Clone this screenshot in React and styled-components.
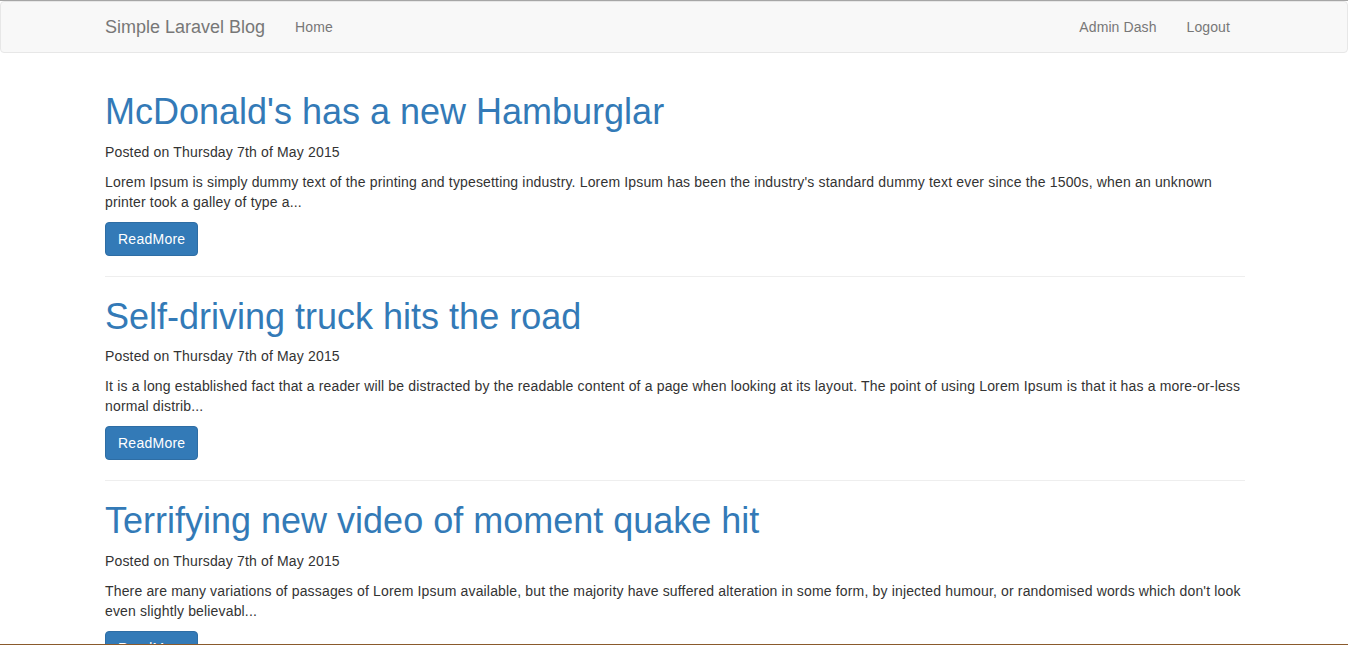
import React from "react";
import styled, { createGlobalStyle } from "styled-components";

// styles
const GlobalStyle = createGlobalStyle`
  html {
    overflow: hidden;
  }
  body {
    margin: 0;
    border-top: 1px solid #a6a6a6;
    background-color: #fff;
    font-family: "Liberation Sans", Arial, Helvetica, sans-serif;
    font-size: 14px;
    line-height: 1.42857143;
    color: #333;
  }
  * {
    box-sizing: border-box;
  }
`;

const NavbarStyle = styled.nav`
  min-height: 50px;
  margin-bottom: 19px;
  background-color: #f8f8f8;
  border: 1px solid #e7e7e7;
  border-radius: 4px;
`;

const ContainerStyle = styled.div`
  display: flow-root;
  width: 1170px;
  margin-left: calc(50% - 584px);
  padding: 0 15px;
`;

const NavInnerStyle = styled.div`
  display: flex;
  align-items: center;
  justify-content: space-between;
`;

const NavGroupStyle = styled.ul`
  display: flex;
  margin: 0;
  padding: 0;
  list-style: none;
`;

const BrandStyle = styled.a`
  display: block;
  height: 50px;
  padding: 15px 15px 15px 0;
  font-size: 18px;
  line-height: 20px;
  color: #777;
  text-decoration: none;
`;

const NavLinkStyle = styled.a`
  display: block;
  padding: 15px;
  line-height: 20px;
  letter-spacing: 0.1px;
  color: #777;
  text-decoration: none;
`;

const PostTitleStyle = styled.h1`
  margin: 20px 0 10px;
  font-size: 36px;
  font-weight: 500;
  line-height: 1.1;
  a {
    color: #337ab7;
    text-decoration: none;
  }
`;

const TextStyle = styled.p`
  margin: 0 0 10px;
  letter-spacing: 0.16px;
`;

const ButtonStyle = styled.a`
  display: inline-block;
  padding: 6px 12px;
  font-size: 14px;
  line-height: 1.42857143;
  letter-spacing: 0.25px;
  color: #fff;
  background-color: #337ab7;
  border: 1px solid #2e6da4;
  border-radius: 4px;
  text-decoration: none;
`;

const DividerStyle = styled.hr`
  margin: 20px 0;
  border: 0;
  border-top: 1px solid #eee;
`;

const WindowEdgeStyle = styled.div`
  position: fixed;
  left: 0;
  right: 0;
  bottom: 0;
  height: 1px;
  background-color: #8a5a2c;
`;

// data
const POSTS = [
  {
    title: "McDonald's has a new Hamburglar",
    date: "Thursday 7th of May 2015",
    excerpt:
      "Lorem Ipsum is simply dummy text of the printing and typesetting industry. Lorem Ipsum has been the industry's standard dummy text ever since the 1500s, when an unknown printer took a galley of type a...",
  },
  {
    title: "Self-driving truck hits the road",
    date: "Thursday 7th of May 2015",
    excerpt:
      "It is a long established fact that a reader will be distracted by the readable content of a page when looking at its layout. The point of using Lorem Ipsum is that it has a more-or-less normal distrib...",
  },
  {
    title: "Terrifying new video of moment quake hit",
    date: "Thursday 7th of May 2015",
    excerpt:
      "There are many variations of passages of Lorem Ipsum available, but the majority have suffered alteration in some form, by injected humour, or randomised words which don't look even slightly believabl...",
  },
];

const App = () => {
  return (
    <>
      <GlobalStyle />
      <NavbarStyle>
        <ContainerStyle>
          <NavInnerStyle>
            <NavGroupStyle>
              <li>
                <BrandStyle href="#">Simple Laravel Blog</BrandStyle>
              </li>
              <li>
                <NavLinkStyle href="#">Home</NavLinkStyle>
              </li>
            </NavGroupStyle>
            <NavGroupStyle>
              <li>
                <NavLinkStyle href="#">Admin Dash</NavLinkStyle>
              </li>
              <li>
                <NavLinkStyle href="#">Logout</NavLinkStyle>
              </li>
            </NavGroupStyle>
          </NavInnerStyle>
        </ContainerStyle>
      </NavbarStyle>
      <ContainerStyle>
        {POSTS.map((post, index) => (
          <React.Fragment key={index}>
            <PostTitleStyle>
              <a href="#">{post.title}</a>
            </PostTitleStyle>
            <TextStyle>Posted on {post.date}</TextStyle>
            <TextStyle>{post.excerpt}</TextStyle>
            <ButtonStyle href="#">ReadMore</ButtonStyle>
            {index < POSTS.length - 1 && <DividerStyle />}
          </React.Fragment>
        ))}
      </ContainerStyle>
      <WindowEdgeStyle />
    </>
  );
};

export default App;
